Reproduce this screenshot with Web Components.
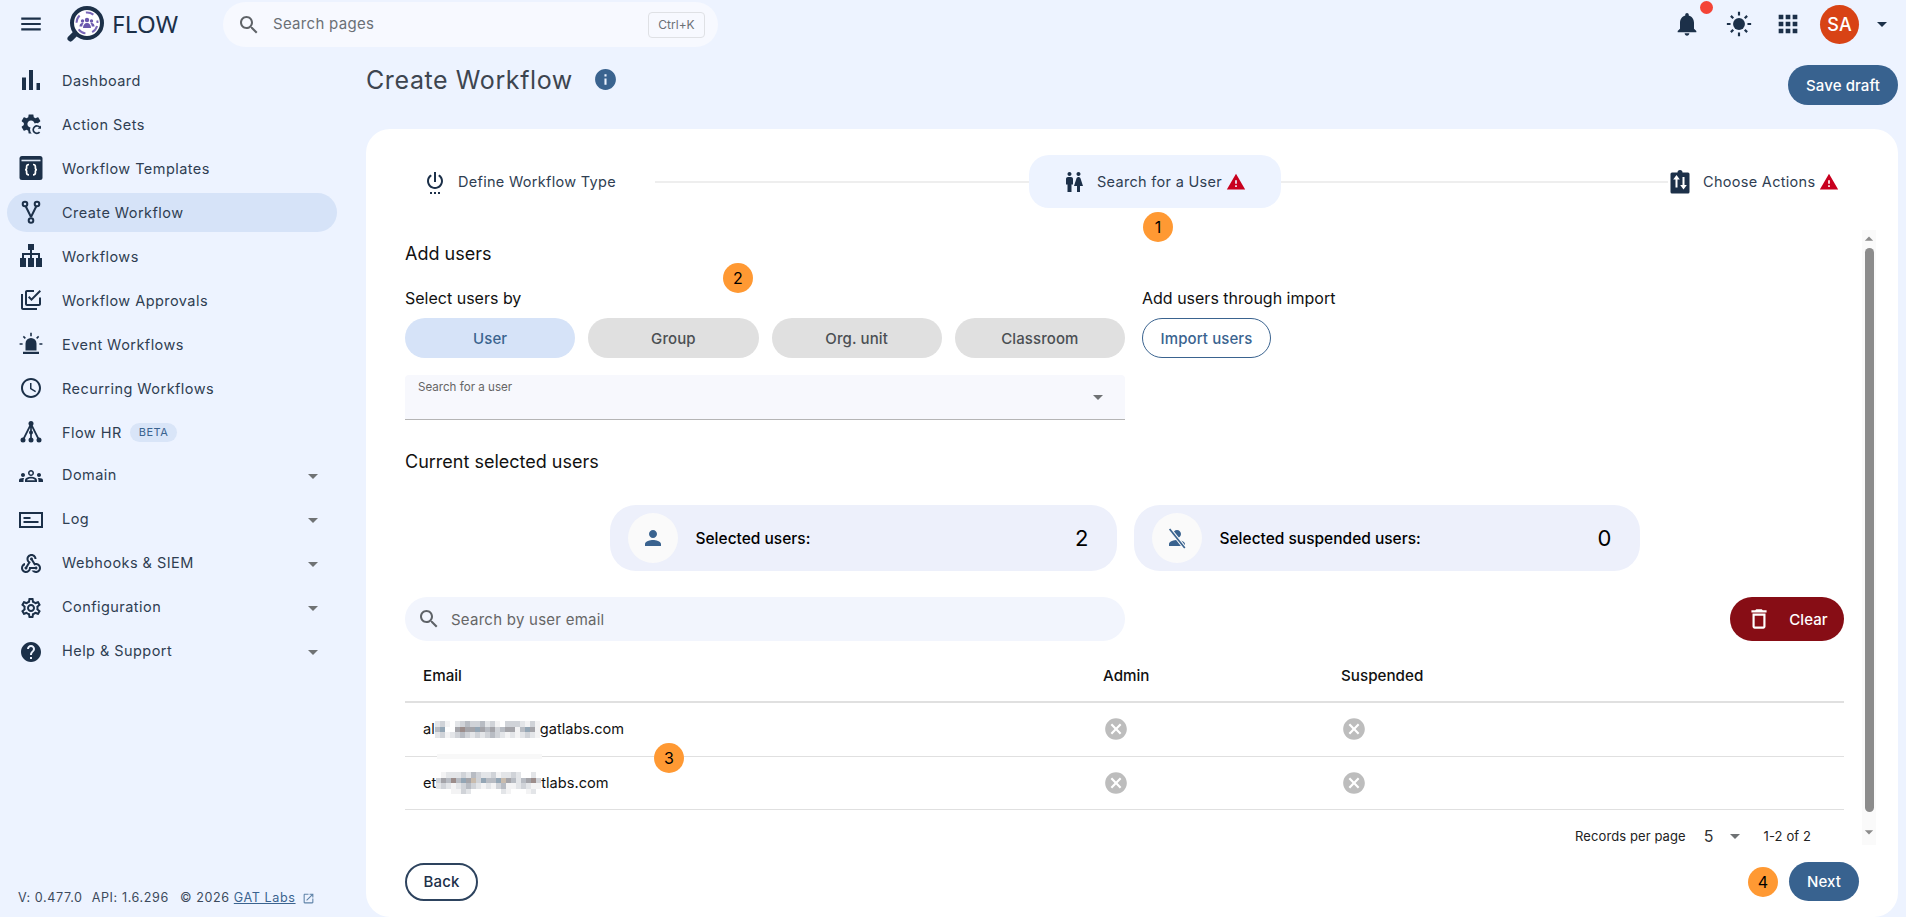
<!DOCTYPE html>
<html lang="en">
<head>
<meta charset="utf-8">
<title>Create Workflow</title>
<style>
html, body { margin: 0; height: 100%; overflow: hidden; background: #edf3ff; }
body { font-family: Inter, "Liberation Sans", sans-serif; color: #2c3b50; }
</style>
</head>
<body>
<flow-app>
  <flow-topbar slot="top"></flow-topbar>
  <flow-sidebar slot="side">
    <nav-item icon="bars">Dashboard</nav-item>
    <nav-item icon="gearsync">Action Sets</nav-item>
    <nav-item icon="template">Workflow Templates</nav-item>
    <nav-item icon="fork" active>Create Workflow</nav-item>
    <nav-item icon="sitemap">Workflows</nav-item>
    <nav-item icon="approvals">Workflow Approvals</nav-item>
    <nav-item icon="siren">Event Workflows</nav-item>
    <nav-item icon="clock">Recurring Workflows</nav-item>
    <nav-item icon="tree" badge="BETA">Flow HR</nav-item>
    <nav-item icon="groups" expand>Domain</nav-item>
    <nav-item icon="log" expand>Log</nav-item>
    <nav-item icon="webhook" expand>Webhooks &amp; SIEM</nav-item>
    <nav-item icon="settings" expand>Configuration</nav-item>
    <nav-item icon="help" expand>Help &amp; Support</nav-item>
  </flow-sidebar>
  <create-workflow slot="main"></create-workflow>
</flow-app>

<script>
const ICONS = {
  menu: `<path d="M3 18h18v-2H3v2zm0-5h18v-2H3v2zm0-7v2h18V6H3z"/>`,
  search: `<path d="M15.5 14h-.79l-.28-.27C15.41 12.59 16 11.11 16 9.5 16 5.91 13.09 3 9.5 3S3 5.91 3 9.5 5.91 16 9.5 16c1.61 0 3.09-.59 4.23-1.57l.27.28v.79l5 4.99L20.49 19l-4.99-5zm-6 0C7.01 14 5 11.99 5 9.5S7.01 5 9.5 5 14 7.01 14 9.5 11.99 14 9.5 14z"/>`,
  bars: `<path d="M3 9.5h4V22H3zM10 2h4v20h-4zM17.500 15H21v7h-3.500z"/>`,
  gearsync: `<path d="M19.140 12.940c.04-.3.06-.61.06-.94 0-.32-.02-.64-.07-.94l2.030-1.580c.18-.14.23-.41.12-.61l-1.920-3.320c-.12-.22-.37-.29-.59-.22l-2.390.96c-.5-.38-1.030-.7-1.620-.94l-.36-2.540c-.04-.24-.24-.41-.48-.41h-3.840c-.24 0-.43.17-.47.41l-.36 2.540c-.59.24-1.130.57-1.620.94l-2.390-.96c-.22-.08-.47 0-.59.22L2.740 8.870c-.12.21-.08.47.12.61l2.030 1.580c-.05.3-.09.63-.09.94s.02.64.07.94l-2.030 1.580c-.18.14-.23.41-.12.61l1.920 3.320c.12.22.37.29.59.22l2.390-.96c.5.38 1.030.7 1.620.94l.36 2.540c.05.24.24.41.48.41h3.840c.24 0 .44-.17.47-.41l.36-2.540c.59-.24 1.130-.56 1.620-.94l2.390.96c.22.08.47 0 .59-.22l1.920-3.320c.12-.22.07-.47-.12-.61l-2.010-1.580zM12 15.600c-1.980 0-3.600-1.620-3.600-3.600s1.620-3.600 3.600-3.600 3.600 1.620 3.600 3.600-1.620 3.600-3.600 3.600z"/><circle cx="17.500" cy="17.500" r="6.500" fill="#edf3ff"/><path d="M20.600 20.200a3.700 3.700 0 1 1 .3-4.700" fill="none" stroke="currentColor" stroke-width="1.700"/><path d="M22 13.500v3.300h-3.300z"/>`,
  template: `<rect x="0.500" y="0" width="23" height="24" rx="2.500"/><rect x="2.500" y="3.700" width="19" height="1.600" fill="#dfe7f5"/><path d="M10 8.500c-1.800 0-2.400.8-2.400 2.200v1.700c0 .8-.5 1.200-1.500 1.300 1 .1 1.500.5 1.500 1.300v1.700c0 1.400.6 2.200 2.400 2.200M14 8.500c1.800 0 2.400.8 2.400 2.200v1.700c0 .8.5 1.200 1.500 1.300-1 .1-1.500.5-1.500 1.300v1.700c0 1.400-.6 2.200-2.400 2.200" fill="none" stroke="#fff" stroke-width="1.700"/>`,
  fork: `<g fill="none" stroke="currentColor" stroke-width="2"><circle cx="6" cy="4" r="2.300"/><circle cx="18" cy="4" r="2.300"/><circle cx="12" cy="20.500" r="2.300"/><path d="M6.700 6.300 12 17M17.300 6.300 12 17"/></g>`,
  sitemap: `<path d="M9 0h6v6h-2v3h8v5h2v9h-6v-9h2v-3h-6v3h2v9H9v-9h2v-3H5v3h2v9H1v-9h2V9h8V6H9z"/>`,
  approvals: `<path d="M22 9.500V16c0 1.100-.9 2-2 2H8c-1.100 0-2-.9-2-2V4c0-1.100.9-2 2-2h7v2H8v12h12V9.500zM12.470 13 9 9.500l1.400-1.410 2.070 2.080L20.600 2 22 3.410 12.470 13zM4 6H2v14c0 1.100.9 2 2 2h14v-2H4V6z"/>`,
  siren: `<path d="M6.500 18.500v-7a5.500 5.500 0 0 1 11 0v7zM4 19.800h16V22H4zM11.200 0.800h1.600v3.500h-1.600zM.6 11.200h3v1.600h-3zM20.400 11.200h3v1.600h-3zM3.800 4.900l1.100-1.100 2 2-1.100 1.100zM19.100 3.800l1.100 1.100-2 2-1.100-1.100z"/>`,
  clock: `<path d="M11.990 2C6.470 2 2 6.480 2 12s4.470 10 9.990 10C17.520 22 22 17.520 22 12S17.520 2 11.990 2zM12 20c-4.420 0-8-3.580-8-8s3.580-8 8-8 8 3.580 8 8-3.580 8-8 8zm.5-13H11v6l5.250 3.150.75-1.230-4.500-2.670z"/>`,
  tree: `<circle cx="12" cy="3.500" r="2.500"/><circle cx="12" cy="12.500" r="2"/><circle cx="4" cy="20" r="2.500"/><circle cx="12" cy="20" r="2.500"/><circle cx="20" cy="20" r="2.500"/><path d="M12 4 4 20M12 4l8 16M12 4v16" fill="none" stroke="currentColor" stroke-width="1.700"/>`,
  groups: `<path d="M12 12.750c1.630 0 3.070.39 4.240.9 1.080.48 1.760 1.560 1.760 2.730V18H6v-1.610c0-1.180.68-2.260 1.760-2.730 1.170-.52 2.610-.91 4.240-.91zM4 13c1.100 0 2-.9 2-2s-.9-2-2-2-2 .9-2 2 .9 2 2 2zm1.130 1.100c-.37-.06-.74-.1-1.130-.1-.99 0-1.930.21-2.780.58C.48 14.900 0 15.620 0 16.430V18h4.500v-1.610c0-.83.23-1.610.63-2.290zM20 13c1.100 0 2-.9 2-2s-.9-2-2-2-2 .9-2 2 .9 2 2 2zm4 3.430c0-.81-.48-1.530-1.220-1.850-.85-.37-1.790-.58-2.780-.58-.39 0-.76.04-1.130.1.4.68.63 1.460.63 2.290V18H24v-1.570zM12 6c1.660 0 3 1.340 3 3s-1.340 3-3 3-3-1.340-3-3 1.340-3 3-3z"/><circle cx="12" cy="9" r="1.500" fill="#edf3ff"/><path d="M8 16.200c.3-1 2-1.700 4-1.700s3.700.7 4 1.700z" fill="#edf3ff"/>`,
  log: `<path fill-rule="evenodd" d="M0 4h24v16H0zm2 2v12h20V6z"/><path d="M4.500 9h7v2h-7zM4.500 13h15v2h-15z"/>`,
  webhook: `<path d="M10 15h5.880c.27-.31.67-.5 1.120-.5.83 0 1.500.67 1.500 1.500s-.67 1.500-1.500 1.500c-.44 0-.84-.19-1.120-.5H11.900c-.46 2.280-2.480 4-4.900 4-2.760 0-5-2.240-5-5 0-2.420 1.720-4.440 4-4.900v2.070c-1.160.41-2 1.530-2 2.830 0 1.650 1.350 3 3 3s3-1.350 3-3v-1zm2.500-11c1.650 0 3 1.350 3 3h2c0-2.760-2.240-5-5-5s-5 2.240-5 5c0 1.430.6 2.710 1.550 3.620l-2.350 3.900C6.020 14.660 5.500 15.270 5.500 16c0 .83.67 1.500 1.500 1.500s1.500-.67 1.500-1.500c0-.16-.02-.31-.07-.45l3.380-5.630C10.490 9.610 9.500 8.420 9.500 7c0-1.650 1.350-3 3-3zm4.500 9c-.64 0-1.230.2-1.720.54l-3.050-5.070C11.530 8.350 11 7.740 11 7c0-.83.67-1.500 1.500-1.500S14 6.170 14 7c0 .15-.02.29-.06.43l2.190 3.650c.28-.05.57-.08.87-.08 2.760 0 5 2.240 5 5s-2.240 5-5 5c-1.850 0-3.470-1.010-4.330-2.500h2.670c.48.32 1.050.5 1.660.5 1.650 0 3-1.350 3-3s-1.350-3-3-3z"/>`,
  settings: `<path d="M19.430 12.980c.04-.32.07-.64.07-.98 0-.34-.03-.66-.07-.98l2.110-1.650c.19-.15.24-.42.12-.64l-2-3.460c-.09-.16-.26-.25-.44-.25-.06 0-.12.01-.17.03l-2.490 1c-.52-.4-1.080-.73-1.690-.98l-.38-2.650C14.460 2.180 14.250 2 14 2h-4c-.25 0-.46.18-.49.42l-.38 2.650c-.61.25-1.170.59-1.690.98l-2.490-1c-.06-.02-.12-.03-.18-.03-.17 0-.34.09-.43.25l-2 3.460c-.13.22-.07.49.12.64l2.110 1.650c-.04.32-.07.65-.07.98 0 .33.03.66.07.98l-2.110 1.650c-.19.15-.24.42-.12.64l2 3.460c.09.16.26.25.44.25.06 0 .12-.01.17-.03l2.490-1c.52.4 1.080.73 1.690.98l.38 2.650c.03.24.24.42.49.42h4c.25 0 .46-.18.49-.42l.38-2.650c.61-.25 1.170-.59 1.690-.98l2.490 1c.06.02.12.03.18.03.17 0 .34-.09.43-.25l2-3.460c.12-.22.07-.49-.12-.64l-2.110-1.650zm-1.980-1.710c.04.31.05.52.05.73 0 .21-.02.43-.05.73l-.14 1.130.89.7 1.080.84-.7 1.210-1.270-.51-1.040-.42-.9.68c-.43.32-.84.56-1.250.73l-1.060.43-.16 1.130-.2 1.350h-1.400l-.19-1.350-.16-1.130-1.060-.43c-.43-.18-.83-.41-1.230-.71l-.91-.7-1.060.43-1.270.51-.7-1.210 1.080-.84.89-.7-.14-1.130c-.03-.31-.05-.54-.05-.74s.02-.43.05-.73l.14-1.130-.89-.7-1.080-.84.7-1.210 1.270.51 1.040.42.9-.68c.43-.32.84-.56 1.250-.73l1.060-.43.16-1.130.2-1.350h1.390l.19 1.350.16 1.130 1.060.43c.43.18.83.41 1.230.71l.91.7 1.060-.43 1.270-.51.7 1.210-1.070.85-.89.7.14 1.130zM12 8c-2.210 0-4 1.790-4 4s1.790 4 4 4 4-1.790 4-4-1.790-4-4-4zm0 6c-1.100 0-2-.9-2-2s.9-2 2-2 2 .9 2 2-.9 2-2 2z"/>`,
  help: `<path d="M12 2C6.480 2 2 6.480 2 12s4.480 10 10 10 10-4.480 10-10S17.520 2 12 2zm1 17h-2v-2h2v2zm2.070-7.750l-.9.92C13.450 12.900 13 13.500 13 15h-2v-.5c0-1.100.45-2.100 1.170-2.830l1.240-1.260c.37-.36.59-.86.59-1.410 0-1.100-.9-2-2-2s-2 .9-2 2H8c0-2.210 1.790-4 4-4s4 1.790 4 4c0 .88-.36 1.680-.93 2.250z"/>`,
  info: `<path d="M12 2C6.480 2 2 6.480 2 12s4.480 10 10 10 10-4.480 10-10S17.520 2 12 2zm1 15h-2v-6h2v6zm0-8h-2V7h2v2z"/>`,
  power: `<path d="M7 24h2v-2H7v2zm4 0h2v-2h-2v2zm2-22h-2v10h2V2zm3.560 2.440l-1.450 1.450C16.840 6.940 18 8.830 18 11c0 3.310-2.690 6-6 6s-6-2.690-6-6c0-2.170 1.160-4.060 2.880-5.120L7.440 4.440C5.360 5.880 4 8.280 4 11c0 4.420 3.580 8 8 8s8-3.580 8-8c0-2.720-1.360-5.120-3.440-6.560zM15 24h2v-2h-2v2z"/>`,
  wc: `<path d="M5.500 22v-7.500H4V9c0-1.100.9-2 2-2h3c1.100 0 2 .9 2 2v5.500H9.500V22h-4zM18 22v-6h3l-2.540-7.630C18.180 7.550 17.420 7 16.560 7h-.12c-.86 0-1.630.55-1.900 1.370L12 16h3v6h3zM7.500 6c1.110 0 2-.89 2-2s-.89-2-2-2-2 .89-2 2 .89 2 2 2zm9 0c1.110 0 2-.89 2-2s-.89-2-2-2-2 .89-2 2 .89 2 2 2z"/>`,
  warning: `<path d="M1 21h22L12 2 1 21zm12-3h-2v-2h2v2zm0-4h-2v-4h2v4z"/>`,
  swapclip: `<path d="M4 2.500h5.500a2.500 2.500 0 0 1 5 0H20a1.500 1.500 0 0 1 1.500 1.500v18a1.500 1.500 0 0 1-1.500 1.500H4A1.500 1.500 0 0 1 2.500 22V4A1.500 1.500 0 0 1 4 2.500z"/><path d="M8.500 5 5.200 9.500h2.300v8h2v-8h2.300zM15.500 19.500l3.300-4.500h-2.300V7h-2v8h-2.300z" fill="#fff"/>`,
  person: `<path d="M12 12c2.210 0 4-1.790 4-4s-1.790-4-4-4-4 1.790-4 4 1.790 4 4 4zm0 2c-2.670 0-8 1.340-8 4v2h16v-2c0-2.660-5.330-4-8-4z"/>`,
  personoff: `<path d="M12 12c2.210 0 4-1.790 4-4s-1.790-4-4-4-4 1.790-4 4 1.790 4 4 4zm0 2c-2.670 0-8 1.340-8 4v2h16v-2c0-2.660-5.330-4-8-4z"/><path d="M5 3.500 19.500 21.500" stroke="#fafafa" stroke-width="3.600" fill="none"/><path d="M4.600 3 19.800 22" stroke="currentColor" stroke-width="1.700" fill="none"/>`,
  trash: `<path d="M6 19c0 1.100.9 2 2 2h8c1.100 0 2-.9 2-2V7H6v12zM8 9h8v10H8V9zm7.500-5l-1-1h-5l-1 1H5v2h14V4z"/>`,
  bell: `<path d="M12 22c1.100 0 2-.9 2-2h-4c0 1.100.9 2 2 2zm6-6v-5c0-3.070-1.630-5.640-4.500-6.320V4c0-.83-.67-1.500-1.500-1.500s-1.500.67-1.500 1.500v.68C7.640 5.360 6 7.920 6 11v5l-2 2v1h16v-1l-2-2z"/>`,
  sun: `<circle cx="12" cy="12" r="5.500"/><path d="M11 .8h2v3.400h-2zM11 19.800h2v3.400h-2zM.8 11h3.400v2H.8zM19.800 11h3.400v2h-3.400zM3.800 5.200l1.400-1.400 2.200 2.200L6 7.400zM16.600 18l1.400-1.400 2.200 2.200-1.400 1.400zM3.800 18.800 6 16.600 7.400 18l-2.200 2.200zM16.600 6l2.200-2.200 1.400 1.400L18 7.400z"/>`,
  apps: `<path d="M4 8h4V4H4v4zm6 12h4v-4h-4v4zm-6 0h4v-4H4v4zm0-6h4v-4H4v4zm6 0h4v-4h-4v4zm6-10v4h4V4h-4zm-6 4h4V4h-4v4zm6 6h4v-4h-4v4zm0 6h4v-4h-4v4z"/>`,
  cancel: `<path d="M12 2C6.470 2 2 6.470 2 12s4.470 10 10 10 10-4.470 10-10S17.530 2 12 2zm5 13.590L15.590 17 12 13.410 8.410 17 7 15.590 10.590 12 7 8.410 8.410 7 12 10.590 15.590 7 17 8.410 13.410 12 17 15.590z"/>`,
  external: `<path d="M19 19H5V5h7V3H5c-1.110 0-2 .9-2 2v14c0 1.100.89 2 2 2h14c1.100 0 2-.9 2-2v-7h-2v7zM14 3v2h3.590l-9.830 9.830 1.410 1.410L19 6.410V10h2V3h-7z"/>`,
  caret: `<path d="M7 10l5 5 5-5z"/>`,
};

function icon(name, size, extra = "") {
  return `<svg width="${size}" height="${size}" viewBox="0 0 24 24" fill="currentColor" style="display:block;flex:none;${extra}">${ICONS[name]}</svg>`;
}

function shadow(host, html) {
  host.attachShadow({ mode: "open" }).innerHTML = html;
}

class FlowApp extends HTMLElement {
  constructor() {
    super();
    shadow(this, `<style>
:host { display: grid; grid-template-columns: 366px 1fr; grid-template-rows: 48px 1fr; height: 917px; width: 1906px; overflow: hidden; }
.top { grid-column: 1 / 3; }
</style>
<div class="top"><slot name="top"></slot></div>
<slot name="side"></slot>
<slot name="main"></slot>`);
  }
}
customElements.define("flow-app", FlowApp);

class FlowTopbar extends HTMLElement {
  constructor() {
    super();
    shadow(this, `<style>
:host { display: flex; align-items: center; height: 48px; color: #1c3049; }
.menu { margin-left: 18px; }
.logo { margin-left: 22px; }
.brand { margin-left: 8px; font: 400 24px "Noto Sans", sans-serif; letter-spacing: .2px; color: #1c3049; width: 71px; margin-top: -2px; }
.search { display: flex; align-items: center; margin-left: 40px; width: 495px; height: 45px; box-sizing: border-box; background: #f7f9ff; border-radius: 23px; padding: 0 13px 0 14px; margin-top: 1px; color: #5f6368; }
.search span { margin-left: 12px; font-size: 15px; letter-spacing: .3px; color: #6b7076; flex: 1; padding-bottom: 2px; }
kbd { font: 400 12px Inter, sans-serif; border: 1px solid #dfe1e5; border-radius: 4px; padding: 0; width: 57px; height: 26px; box-sizing: border-box; display: flex; align-items: center; justify-content: center; color: #6b7076; }
.right { margin-left: auto; display: flex; align-items: center; }
.bell { position: relative; margin-right: 25px; }
.dot { position: absolute; width: 13px; height: 13px; border-radius: 50%; background: #f44336; left: 27px; top: -9px; }
.avatar { width: 39px; height: 39px; border-radius: 50%; background: #d84315; color: #fff; font-size: 18px; font-weight: 500; display: flex; align-items: center; justify-content: center; margin-left: 18px; }
</style>
<div class="menu">${icon("menu", 26)}</div>
<svg class="logo" width="38" height="38" viewBox="0 0 38 38">
  <path d="M11 27 4.500 33.500" stroke="#1c3049" stroke-width="6" stroke-linecap="round"/>
  <circle cx="21" cy="18" r="15" fill="#fff" stroke="#1c3049" stroke-width="4"/>
  <circle cx="21" cy="18" r="10.500" fill="none" stroke="#7a68b8" stroke-width="2" stroke-dasharray="8 7" stroke-dashoffset="-3"/>
  <g fill="#6a58ad"><circle cx="21" cy="15" r="2.200"/><circle cx="16.500" cy="16" r="1.700"/><circle cx="25.500" cy="16" r="1.700"/><path d="M17 23c0-3 1.600-5 4-5s4 2 4 5zM13.500 21.500c0-2 1-3.500 3-3.500 .5 0 .8.1 1 .2-.8 1-1.200 2-1.300 3.300zM28.500 21.500c0-2-1-3.500-3-3.500-.5 0-.8.1-1 .2.8 1 1.200 2 1.300 3.300z"/></g>
</svg>
<span class="brand">FLOW</span>
<div class="search">${icon("search", 24)}<span>Search pages</span><kbd>Ctrl+K</kbd></div>
<div class="right">
  <div class="bell">${icon("bell", 28)}<i class="dot"></i></div>
  ${icon("sun", 26)}
  <div style="margin-left:22px">${icon("apps", 28)}</div>
  <div class="avatar">SA</div>
  <div style="margin:0 12px 0 11px">${icon("caret", 24)}</div>
</div>`);
  }
}
customElements.define("flow-topbar", FlowTopbar);

class FlowSidebar extends HTMLElement {
  constructor() {
    super();
    shadow(this, `<style>
:host { display: flex; flex-direction: column; padding-top: 10px; height: 869px; box-sizing: border-box; }
footer { margin-top: auto; padding: 0 0 11px 18px; font-size: 12.6px; letter-spacing: .6px; color: #3c4a5c; display: flex; align-items: center; white-space: pre; line-height: 16px; }
a { color: #3a638f; text-decoration: underline; }
svg { margin-left: 6px; color: #5f83a8; }
.api { margin-left: 9px; }
.copy { margin-left: 11px; }
</style>
<slot></slot>
<footer><span>V: 0.477.0</span><span class="api">API: 1.6.296</span><span class="copy">© 2026 </span><a>GAT Labs</a>${icon("external", 13)}</footer>`);
  }
}
customElements.define("flow-sidebar", FlowSidebar);

class NavItem extends HTMLElement {
  constructor() {
    super();
    const expand = this.hasAttribute("expand");
    const badge = this.getAttribute("badge");
    shadow(this, `<style>
:host { display: flex; align-items: center; height: 44px; margin-left: 7px; width: 330px; }
.row { display: flex; align-items: center; width: 100%; height: 39px; padding-left: 12px; box-sizing: border-box; border-radius: 20px; color: #1c3049; }
:host([active]) .row { background: #d6e3f8; }
.label { margin-left: 19px; font-size: 14.5px; letter-spacing: .45px; color: #2f3e52; }
:host([expand]) .label { padding-bottom: 4px; }
.beta { margin-left: 8px; background: #d9e5f8; color: #3a638f; font-size: 11px; letter-spacing: .5px; border-radius: 10px; padding: 0 9px; height: 19px; line-height: 19px; }
.caret { margin-left: auto; margin-right: 12px; color: #6f7274; }
</style>
<div class="row">
  ${icon(this.getAttribute("icon"), 24)}
  <span class="label"><slot></slot></span>
  ${badge ? `<span class="beta">${badge}</span>` : ""}
  ${expand ? `<span class="caret">${icon("caret", 24)}</span>` : ""}
</div>`);
  }
}
customElements.define("nav-item", NavItem);

class StepItem extends HTMLElement {
  constructor() {
    super();
    const warn = this.hasAttribute("warn");
    shadow(this, `<style>
:host { display: flex; align-items: center; height: 53px; padding: 0 34px; flex: none; box-sizing: border-box; border-radius: 20px; color: #1c3049; }
:host([current]) { background: #edf3ff; padding-left: 33px; padding-right: 35px; }
span { margin-left: 11px; font-size: 14.5px; letter-spacing: .3px; color: #2f3e52; }
.warn { margin-left: 4px; color: #c8001e; }
</style>
${icon(this.getAttribute("icon"), 24)}
<span><slot></slot></span>
${warn ? `<div class="warn">${icon("warning", 20)}</div>` : ""}`);
  }
}
customElements.define("step-item", StepItem);

class PillButton extends HTMLElement {
  constructor() {
    super();
    shadow(this, `<style>
:host { display: inline-flex; align-items: center; justify-content: center; box-sizing: border-box; height: 40px; border-radius: 20px; font-size: 15px; font-weight: 500; letter-spacing: .1px; flex: none; }
:host([kind="active"]) { background: #d6e3f8; color: #3a638f; flex: 1; }
:host([kind="muted"]) { background: #e0e0e0; color: #4b4f53; flex: 1; }
:host([kind="outline"]) { border: 1px solid #3a638f; color: #3a638f; background: #fff; width: 129px; }
:host([kind="primary"]) { background: #38628f; color: #fff; }
:host([kind="back"]) { border: 2px solid #2d435e; color: #1c3049; background: #fff; width: 73px; height: 38px; }
:host([kind="danger"]) { background: #870d15; color: #fff; height: 44px; width: 114px; border-radius: 22px; }
</style><slot></slot>`);
  }
}
customElements.define("pill-button", PillButton);

class StatCard extends HTMLElement {
  constructor() {
    super();
    shadow(this, `<style>
:host { display: flex; align-items: center; width: 507px; height: 66px; background: #edf0fb; border-radius: 26px; box-sizing: border-box; padding: 0 28px 0 18px; color: #000; }
.circle { width: 50px; height: 50px; border-radius: 50%; background: #fafafa; display: flex; align-items: center; justify-content: center; color: #3a638f; flex: none; }
.label { margin-left: 18px; font-size: 15.5px; font-weight: 500; }
.num { margin-left: auto; font-size: 22px; }
</style>
<div class="circle">${icon(this.getAttribute("icon"), 24)}</div>
<span class="label"><slot></slot></span>
<span class="num">${this.getAttribute("value")}</span>`);
  }
}
customElements.define("stat-card", StatCard);

// pixelated name patch, one letter per block
const MOSAIC = { a: "#ffffff", b: "#f3f3f4", c: "#e3e5e8", d: "#d0d3d8", e: "#b8bcc3", f: "#a4a4a9", g: "#94a6b5", h: "#9c8d8b", i: "#c9bcae" };

class MosaicBlur extends HTMLElement {
  constructor() {
    super();
    const rows = this.getAttribute("rows").split(" ");
    let rects = "";
    rows.forEach((row, y) => {
      [...row].forEach((c, x) => {
        rects += `<rect x="${x * 5}" y="${y * 5.5}" width="5" height="5.5" fill="${MOSAIC[c]}"/>`;
      });
    });
    const w = rows[0].length * 5;
    const h = rows.length * 5.5;
    shadow(this, `<style>:host { display: inline-block; width: ${w}px; height: 16px; position: relative; }
svg { position: absolute; left: 0; top: ${(16 - h) / 2}px; }</style>
<svg width="${w}" height="${h}" viewBox="0 0 ${w} ${h}" shape-rendering="crispEdges">${rects}</svg>`);
  }
}
customElements.define("mosaic-blur", MosaicBlur);

class UserRow extends HTMLElement {
  constructor() {
    super();
    shadow(this, `<style>
:host { display: grid; grid-template-columns: 698px 238px 1fr; align-items: center; height: 53.5px; box-sizing: border-box; border-bottom: 1px solid #e0e0e0; font-size: 14.6px; color: #111; }
.email { padding-left: 18px; display: flex; align-items: center; white-space: pre; }
.off { color: #bdbdbd; }
</style>
<div class="email"><slot></slot></div>
<div class="off">${icon("cancel", 26)}</div>
<div class="off">${icon("cancel", 26)}</div>`);
  }
}
customElements.define("user-row", UserRow);

class UserTable extends HTMLElement {
  constructor() {
    super();
    shadow(this, `<style>
:host { display: block; margin-top: 8px; }
header { display: grid; grid-template-columns: 698px 238px 1fr; align-items: center; height: 54px; box-sizing: border-box; border-bottom: 2px solid #e0e0e0; font-size: 15.2px; font-weight: 500; color: #111; }
header span:first-child { padding-left: 18px; }
.pager { display: flex; align-items: center; justify-content: flex-end; height: 34px; box-sizing: border-box; padding: 18px 33px 0 0; font-size: 13px; letter-spacing: .1px; color: #222; line-height: 16px; }
.pager b { font-weight: 400; font-size: 16px; margin-left: 18px; color: #333; }
.pager i { margin: 0 17px 0 9px; color: #6f7274; }
</style>
<header><span>Email</span><span>Admin</span><span>Suspended</span></header>
<slot></slot>
<div class="pager"><span>Records per page</span><b>5</b><i>${icon("caret", 24)}</i><span>1-2 of 2</span></div>`);
  }
}
customElements.define("user-table", UserTable);

class NoteBadge extends HTMLElement {
  constructor() {
    super();
    shadow(this, `<style>
:host { position: absolute; width: 30px; height: 30px; border-radius: 50%; background: #ff9933; color: #000; font-size: 16px; display: flex; align-items: center; justify-content: center; z-index: 5; }
</style><slot></slot>`);
  }
}
customElements.define("note-badge", NoteBadge);

class FakeScrollbar extends HTMLElement {
  constructor() {
    super();
    shadow(this, `<style>
:host { display: flex; flex-direction: column; align-items: center; width: 14px; background: #fafafa; color: #8c8c8c; }
.thumb { flex: 1; width: 9px; background: #8c8c8c; border-radius: 5px; margin: 3px 0 18px; }
</style>
<div style="height:13px;margin-top:2px">${icon("caret", 20, "transform:rotate(180deg);margin:-3px -3px 0")}</div>
<div class="thumb"></div>
<div style="height:13px;margin-bottom:2px">${icon("caret", 20, "margin:-8px -3px 0")}</div>`);
  }
}
customElements.define("fake-scrollbar", FakeScrollbar);

class CreateWorkflow extends HTMLElement {
  constructor() {
    super();
    shadow(this, `<style>
:host { display: flex; flex-direction: column; min-width: 0; height: 869px; position: relative; padding-right: 8px; }
.head { display: flex; align-items: flex-start; height: 81px; flex: none; }
h1 { margin: 13px 0 0; font-size: 25px; font-weight: 400; line-height: 38px; letter-spacing: .6px; color: #3d4550; }
.info { color: #3a638f; margin: 19px 0 0 20px; }
.save { margin: 17px 0 0 auto; width: 110px; }
.card { background: #fff; border-radius: 24px; flex: 1; display: flex; flex-direction: column; padding: 26px 0 0 39px; min-height: 0; position: relative; }
.stepper { display: flex; align-items: center; margin-left: -16px; }
.line { height: 2px; background: #eeeeee; flex: none; }
.body { display: flex; height: 615px; margin-top: 22px; flex: none; }
.content { width: 1439px; flex: none; }
fake-scrollbar { margin-left: 18px; }
h3 { margin: 12px 0 0; font-size: 18px; font-weight: 400; line-height: 24px; color: #111; }
h3.selected { margin-top: 30px; }
.picker { display: grid; grid-template-columns: 720px 1fr; column-gap: 17px; margin-top: 22px; }
.caption { font-size: 16px; line-height: 20px; color: #111; }
.buttons { display: flex; gap: 13px; margin-top: 10px; }
.select { height: 45px; margin-top: 17px; background: #f7f8fd; border-bottom: 1px solid #b5b5b5; box-sizing: border-box; border-radius: 4px 4px 0 0; padding: 5px 15px 0 13px; display: flex; justify-content: space-between; font-size: 11.6px; color: #666; line-height: 14px; }
.select svg { margin-top: 5px; color: #6f7274; }
.stats { display: flex; justify-content: center; gap: 17px; margin-top: 31px; }
.stats stat-card + stat-card { width: 506px; }
.filter { display: flex; justify-content: space-between; margin-top: 26px; }
.search { width: 720px; height: 44px; background: #f2f5fd; border-radius: 22px; display: flex; align-items: center; padding-left: 12px; box-sizing: border-box; color: #5f6368; font-size: 15px; letter-spacing: .25px; }
.search span { margin-left: 10px; color: #666; }
pill-button svg { margin-right: 17px; }
.actions { display: flex; align-items: center; margin-top: 17px; width: 1454px; justify-content: space-between; }
.next { width: 70px; height: 39px; }
.streak { position: absolute; left: 71px; top: 625px; width: 105px; height: 5px; background: #f8f8f8; }
</style>
<div class="head">
  <h1>Create Workflow</h1>
  <div class="info">${icon("info", 25)}</div>
  <pill-button class="save" kind="primary">Save draft</pill-button>
</div>
<div class="card">
  <div class="stepper">
    <step-item icon="power" style="padding-right:39px">Define Workflow Type</step-item>
    <div class="line" style="width:374px"></div>
    <step-item icon="wc" warn current>Search for a User</step-item>
    <div class="line" style="width:387px"></div>
    <step-item icon="swapclip" warn style="padding-left:0">Choose Actions</step-item>
  </div>
  <div class="body">
    <div class="content">
      <h3>Add users</h3>
      <div class="picker">
        <div>
          <div class="caption">Select users by</div>
          <div class="buttons">
            <pill-button kind="active">User</pill-button>
            <pill-button kind="muted">Group</pill-button>
            <pill-button kind="muted">Org. unit</pill-button>
            <pill-button kind="muted">Classroom</pill-button>
          </div>
          <div class="select"><span>Search for a user</span>${icon("caret", 24)}</div>
        </div>
        <div>
          <div class="caption">Add users through import</div>
          <div class="buttons"><pill-button kind="outline">Import users</pill-button></div>
        </div>
      </div>
      <h3 class="selected">Current selected users</h3>
      <div class="stats">
        <stat-card icon="person" value="2">Selected users:</stat-card>
        <stat-card icon="personoff" value="0">Selected suspended users:</stat-card>
      </div>
      <div class="filter">
        <div class="search">${icon("search", 24)}<span>Search by user email</span></div>
        <pill-button kind="danger">${icon("trash", 26)}Clear</pill-button>
      </div>
      <user-table>
        <user-row>al<mosaic-blur rows="cdbacdeddecdbadddcbdb egaafhffgfefdeffbegfb cdbcdedcdcdedcbcbcdcb"></mosaic-blur>gatlabs.com</user-row>
        <user-row>et<mosaic-blur rows="abcccdcedccdbccdcaaca dfehegfidgeegifecefhd cdcbcdedcbcbdebbcdcbb aaabbdcaaaaaacbaaabca"></mosaic-blur>tlabs.com</user-row>
      </user-table>
    </div>
    <fake-scrollbar></fake-scrollbar>
  </div>
  <div class="actions">
    <pill-button kind="back">Back</pill-button>
    <pill-button class="next" kind="primary">Next</pill-button>
  </div>
  <i class="streak"></i>
</div>
<note-badge style="left:777px;top:164px">1</note-badge>
<note-badge style="left:357px;top:215px">2</note-badge>
<note-badge style="left:288px;top:695px">3</note-badge>
<note-badge style="left:1382px;top:819px">4</note-badge>`);
  }
}
customElements.define("create-workflow", CreateWorkflow);
</script>
</body>
</html>
